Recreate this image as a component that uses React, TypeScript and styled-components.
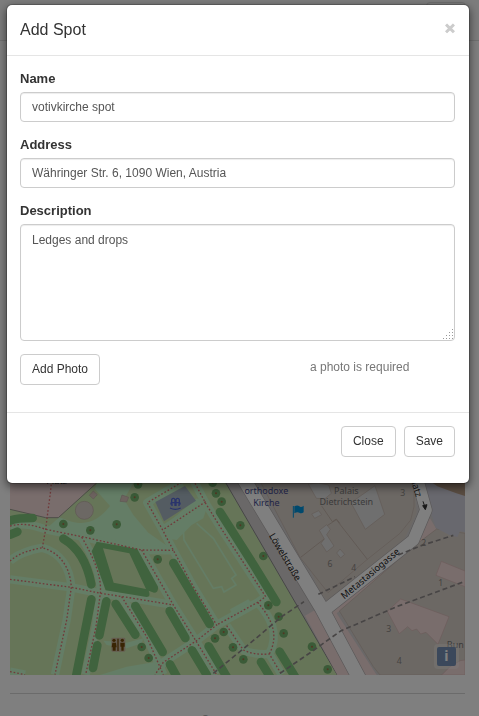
import React from "react";
import styled, { createGlobalStyle } from "styled-components";

const GlobalStyle = createGlobalStyle`
  *, *::before, *::after { box-sizing: border-box; }
  html, body { margin: 0; height: 100%; overflow: hidden; }
  body {
    background: #fff;
    color: #333;
    font-family: "Liberation Sans", Arial, sans-serif;
    font-size: 12px;
    line-height: 18px;
  }
  button, input, textarea { font: inherit; }
`;

const Page = styled.div`
  height: 100vh;
  overflow: hidden;
`;

const Navbar = styled.header`
  display: flex;
  justify-content: flex-end;
  height: 41px;
  padding: 2px 13px;
  background: #f8f8f8;
  border-bottom: 1px solid #e0e0e0;
`;

const MenuToggle = styled.button`
  width: 40px;
  height: 31px;
  background: transparent;
  border: 1px solid #ddd;
  border-radius: 4px;
`;

const MapPanel = styled.main`
  display: flex;
  align-items: flex-end;
  height: 614px;
  margin: 20px 14px 0 10px;
  background: #e0dfdf;
`;

const MapCanvas = styled.svg`
  display: block;
  width: 100%;
  height: 205px;
  font-family: "Noto Sans", sans-serif;
`;

const Footer = styled.footer`
  margin: 18px 14px 0 10px;
  padding-top: 18px;
  border-top: 1px solid #d6d6d6;
  color: #777;
  text-align: center;
`;

const Backdrop = styled.div`
  position: fixed;
  inset: 0;
  background: rgba(0, 0, 0, 0.5);
`;

const Dialog = styled.section`
  margin: 4px 9px 0 6px;
  background: #fff;
  background-clip: padding-box;
  border: 1px solid rgba(0, 0, 0, 0.2);
  border-radius: 6px;
  box-shadow: 0 3px 9px rgba(0, 0, 0, 0.5);
`;

const DialogHeader = styled.div`
  display: flex;
  align-items: center;
  justify-content: space-between;
  height: 51px;
  padding: 0 14px 0 13px;
  border-bottom: 1px solid #e5e5e5;
`;

const Title = styled.h4`
  margin: 0;
  font-size: 16px;
  font-weight: 400;
`;

const Dismiss = styled.button`
  padding: 0 0 2px;
  border: 0;
  background: none;
  color: #ccc;
  font-size: 17px;
  font-weight: 700;
  -webkit-text-stroke: 1px #ccc;
`;

const DialogBody = styled.div`
  padding: 14px 14px 27px 13px;
`;

const Field = styled.div<{ $last?: boolean }>`
  margin-bottom: ${(p) => (p.$last ? "13px" : "14px")};
`;

const Label = styled.label`
  display: block;
  margin-bottom: 4px;
  font-size: 13px;
  font-weight: 700;
`;

const Input = styled.input`
  display: block;
  width: 100%;
  height: 30px;
  padding: 5px 11px;
  color: #555;
  background: #fff;
  border: 1px solid #ccc;
  border-radius: 4px;
  box-shadow: inset 0 1px 1px rgba(0, 0, 0, 0.075);
`;

const AreaWrap = styled.div`
  position: relative;
`;

const TextArea = styled(Input)`
  height: 117px;
  padding-top: 6px;
  resize: none;
`;

const Grip = styled.svg`
  position: absolute;
  right: 2px;
  bottom: 2px;
  pointer-events: none;
`;

const PhotoRow = styled.div`
  display: grid;
  grid-template-columns: 2fr 1fr;
`;

const Button = styled.button`
  justify-self: start;
  height: 31px;
  padding: 0 11px 1px;
  color: #333;
  background: #fff;
  border: 1px solid #ccc;
  border-radius: 4px;
`;

const Hint = styled.span`
  padding-top: 4px;
  color: #777;
`;

const DialogFooter = styled.div`
  display: flex;
  justify-content: flex-end;
  gap: 8px;
  padding: 13px 14px 26px;
  border-top: 1px solid #e5e5e5;
`;

const footpaths = [
  "M158 0L151 70L143 130L137 178L127 233",
  "M30 168C70 158 100 165 137 178L250 201L425 240L520 241",
  "M30 273C55 250 90 240 127 233C180 248 210 290 214 352L200 450L165 614",
  "M30 328L214 352L303 370L400 385L520 405",
  "M245 201C285 270 305 320 301 370L288 470L257 614",
  "M365 380L440 500L490 614",
  "M425 240L520 405L588 513L650 614",
  "M545 37L442 98L488 180L520 241L580 350L650 465L588 513L490 577L465 614",
  "M580 30L617 100L660 170L797 380L773 397L650 465",
  "M617 95L488 180",
  "M680 467L730 540C760 555 790 553 808 552L845 614",
  "M773 397C810 440 840 490 808 552",
  "M30 605L75 614",
];

const hedges = [
  "M30 152C50 144 75 144 98 144",
  "M30 194L52 185",
  "M190 206C235 232 262 280 274 343",
  "M274 388L228 620",
  "M319 394L298 496",
  "M292 526L279 594",
  "M347 402L406 494",
  "M406 408L488 546",
  "M509 423L556 504",
  "M520 279L629 462",
  "M660 126L763 288L829 396",
  "M576 541L620 614",
  "M626 529L680 620",
  "M510 583L530 620",
  "M783 576L810 620",
  "M839 545L885 620",
];

const trees = [
  [190, 162], [271, 181], [350, 163], [404, 82], [414, 43], [473, 268],
  [648, 70], [665, 95], [638, 38], [721, 166], [790, 258], [805, 406],
  [836, 440], [851, 490], [936, 530], [983, 598], [671, 486], [645, 505],
  [699, 532], [730, 568], [425, 531], [446, 564],
];

const houseNumbers: Array<[string, number, number]> = [
  ["3", 1208, 78], ["2", 1271, 227], ["6", 990, 292], ["4", 1061, 304],
  ["1", 1322, 347], ["3", 1166, 487], ["4", 1198, 581],
];

function CityMap() {
  return (
    <MapCanvas viewBox="30 0 1365 615" preserveAspectRatio="xMidYMax slice" role="img" aria-label="Map">
      <rect x="0" width="1500" height="615" fill="#d9d0c9" />

      <path d="M0 0H655L1012 615H0Z" fill="#cdebb0" />
      <path d="M290 39H400L372 88L400 135L445 188L520 241L425 240L137 178L178 142L215 155C270 168 300 145 330 108L285 57Z" fill="#c8facc" />
      <path d="M590 85L625 100L610 145L575 165L530 210L495 205L485 175Z" fill="#c8facc" />
      <path d="M690 418L745 388L760 405L700 440Z M380 590L500 570L490 615H300Z" fill="#c8facc" />
      <path d="M380 518L430 505L425 520L380 535L320 525L310 512Z" fill="#c8facc" />
      <g fill="none" stroke="#c8facc" strokeWidth="25" strokeLinejoin="round">
        {footpaths.slice(1).map((d) => <path key={d} d={d} />)}
      </g>
      <path d="M550 180L552 210L640 355L665 350L672 366L708 345L695 325L708 315L640 205L590 160" fill="none" stroke="#c8facc" strokeWidth="5" />

      <path d="M0 0H330L285 42L175 143L137 143L30 118H0Z" fill="#f2dad9" />
      <path d="M290 39L175 143H137L30 118" fill="none" stroke="#9b9b90" strokeWidth="3" />
      <circle cx="253" cy="121" r="27" fill="#d9d0c9" stroke="#bcaea4" strokeWidth="2" />
      <path d="M280 63L292 74L280 87L268 76Z M366 75L386 82L380 96L360 94Z" fill="#d9c4bd" stroke="#bcaea4" strokeWidth="2" />

      <path d="M466 96L555 48L588 92L492 154Z" fill="#a9b9c4" />
      <g fill="none" stroke="#5468d8" strokeWidth="4">
        <path d="M525 108V91Q525 85 520 85Q515 85 515 91V96M528 108V91Q528 85 533 85Q538 85 538 91V96M516 108V103Q516 99 511 103M537 108V103Q537 99 542 103M512 98H541" />
        <path d="M510 114Q526 122 542 114" />
      </g>

      <g fill="none" stroke="#80c67c" strokeWidth="26" strokeLinecap="round">
        {hedges.map((d) => <path key={d} d={d} />)}
      </g>
      <path d="M275 244L290 215L412 237L474 350Q476 368 462 368L446 362Q454 380 440 381L317 361Z M309 235L341 338L438 357L388 250Z" fill="#80c67c" fillRule="evenodd" />

      {trees.map(([x, y]) => (
        <g key={`${x}-${y}`}>
          <circle cx={x} cy={y} r="13" fill="#76b670" />
          <circle cx={x} cy={y} r="3" fill="#a46d45" />
        </g>
      ))}

      <g fill="none" stroke="#e07474" strokeWidth="4" strokeDasharray="5 6">
        {footpaths.map((d) => <path key={d} d={d} />)}
      </g>

      <path d="M675 0H730L1040 530L1100 615H1012L655 0Z" fill="#d4d1d1" />
      <path d="M655 0L1012 615" stroke="#8d8d8d" strokeWidth="3" />
      <path d="M915 437L945 420L1055 615H1012Z" fill="#f2dad9" />

      <path d="M750 0H800L915 262L960 370L985 395L1210 215L1250 130L1240 0H1310V160L1025 420L1145 615H1060Z" fill="#d4d1d1" />
      <path d="M783 39L900 262L984 368L1102 268L1200 190L1232 150L1242 110V39Z" fill="#d9d0c9" stroke="#c4b5aa" strokeWidth="2" />
      <path d="M902 262L975 205M980 168L1009 149L1102 268" fill="none" stroke="#b8a89c" strokeWidth="2" />
      <path d="M955 39L986 45L994 70L975 86L949 85L925 42Z M1053 98L1125 47L1154 133L1096 178Z" fill="#dedede" stroke="#c4b5aa" strokeWidth="2" />
      <path d="M935 132L956 122L965 134L944 145Z M958 181L980 164L991 178L980 194L1002 228L980 246L963 220L973 207Z M1010 249L1020 237L1034 253L1022 264Z" fill="#dedede" stroke="#c4b5aa" strokeWidth="2" />
      <path d="M965 108L997 155L1009 147L1020 160" fill="none" stroke="#b8a89c" strokeWidth="2" />

      <path d="M1290 145L1311 180L1010 430L1130 615H1085L980 430Z" fill="#f2dad9" />
      <path d="M1310 177L1395 190V615H1140L1120 590L1018 423L1240 230Z" fill="#d9d0c9" stroke="#c4b5aa" strokeWidth="2" />
      <path d="M1265 35H1395V187L1380 184L1372 201L1348 195L1307 173L1290 120Z" fill="#d1d0dc" />
      <path d="M1285 30H1395V78L1367 69L1312 49Z" fill="#b49a84" />
      <path d="M1324 274L1395 303V350L1308 316Z M1202 387L1347 440L1314 523L1278 487L1262 492L1250 477L1236 482L1223 470L1198 491L1162 424Z M1395 570V615H1325L1350 590L1380 572Z" fill="#f2dad9" stroke="#d9b8b5" strokeWidth="2" />

      <g fill="none" stroke="#b5b1b1" strokeLinejoin="round">
        <path d="M715 0L965 415L1080 630" strokeWidth="45" />
        <path d="M975 420L1240 210L1278 120L1250 20" strokeWidth="39" />
      </g>
      <g fill="none" stroke="#fff" strokeLinejoin="round">
        <path d="M715 0L965 415L1080 630" strokeWidth="41" />
        <path d="M975 420L1240 210L1278 120L1250 20" strokeWidth="35" />
      </g>

      <g fill="none" stroke="#8f8a8a" strokeWidth="5" strokeDasharray="15 9">
        <path d="M640 610L750 520L845 440L912 395" />
        <path d="M840 610L935 545L1022 483L1190 410L1395 334" />
        <path d="M955 373L1065 320M1195 255L1260 228L1360 196" />
      </g>

      <path d="M880 108V143" stroke="#0092da" strokeWidth="3" />
      <path d="M883 109Q893 104 898 109T911 107V127Q904 132 898 128T883 130Z" fill="#0092da" />
      <rect x="334" y="503" width="42" height="42" rx="4" fill="#c9b9a0" />
      <g fill="#734a08">
        <circle cx="342" cy="511" r="5" /><circle cx="367" cy="511" r="5" />
        <path d="M337 518H348L350 532H347V542H338V532H335Z M361 518H374V530H371V542H364V530H361Z M352 506H356V543H352Z" />
      </g>

      <g fontSize="27" textAnchor="middle">
        <g fill="#444a90">
          <text x="799" y="72">orthodoxe</text>
          <text x="799" y="109">Kirche</text>
        </g>
        <g fill="#777">
          <text x="1039" y="71">Palais</text>
          <text x="1039" y="106">Dietrichstein</text>
          <text x="1366" y="533">Bun</text>
        </g>
        <g fill="#222" fontSize="28">
          <text x="170" y="41">Platz</text>
          <text transform="translate(847 266) rotate(59)">Löwelstraße</text>
          <text transform="translate(1117 318) rotate(-40)">Metastasiogasse</text>
          <text transform="translate(1239 52) rotate(73)">Platz</text>
        </g>
      </g>
      <path d="M1269 94L1275 112M1268 107L1276 119L1281 104Z" stroke="#333" strokeWidth="3" fill="#333" />
      <g fontSize="26" fill="#8b8681" textAnchor="middle">
        {houseNumbers.map(([label, x, y]) => <text key={`${x}-${y}`} x={x} y={y}>{label}</text>)}
      </g>

      <rect x="1302" y="522" width="75" height="75" rx="12" fill="#fff" fillOpacity="0.3" />
      <rect x="1311" y="531" width="57" height="57" rx="6" fill="#7690b6" />
      <text x="1339" y="573" fill="#fff" fontSize="42" fontWeight="700" textAnchor="middle">i</text>
    </MapCanvas>
  );
}

const gripDots = [[9, 0], [6, 3], [9, 3], [3, 6], [6, 6], [9, 6], [0, 9], [3, 9], [6, 9], [9, 9]];

export default function App() {
  return (
    <>
      <GlobalStyle />
      <Page>
        <Navbar><MenuToggle aria-label="Toggle navigation" /></Navbar>
        <MapPanel><CityMap /></MapPanel>
        <Footer>© Spots 2017</Footer>
      </Page>
      <Backdrop>
        <Dialog role="dialog" aria-modal="true" aria-labelledby="dialog-title">
          <DialogHeader>
            <Title id="dialog-title">Add Spot</Title>
            <Dismiss type="button" aria-label="Dismiss">×</Dismiss>
          </DialogHeader>
          <DialogBody>
            <Field>
              <Label htmlFor="name">Name</Label>
              <Input id="name" defaultValue="votivkirche spot" />
            </Field>
            <Field>
              <Label htmlFor="address">Address</Label>
              <Input id="address" defaultValue="Währinger Str. 6, 1090 Wien, Austria" />
            </Field>
            <Field $last>
              <Label htmlFor="description">Description</Label>
              <AreaWrap>
                <TextArea as="textarea" id="description" defaultValue="Ledges and drops" />
                <Grip width="10" height="10" fill="#999" aria-hidden="true">
                  {gripDots.map(([x, y]) => <rect key={`${x}-${y}`} x={x} y={y} width="1" height="1" />)}
                </Grip>
              </AreaWrap>
            </Field>
            <PhotoRow>
              <Button type="button">Add Photo</Button>
              <Hint>a photo is required</Hint>
            </PhotoRow>
          </DialogBody>
          <DialogFooter>
            <Button type="button">Close</Button>
            <Button type="button">Save</Button>
          </DialogFooter>
        </Dialog>
      </Backdrop>
    </>
  );
}
